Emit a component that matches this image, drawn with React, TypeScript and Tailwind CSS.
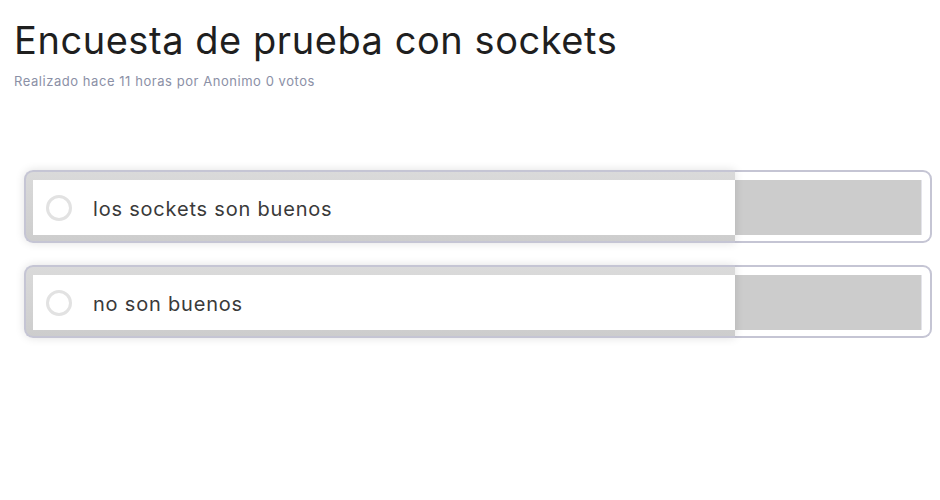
import React from "react";

const options = ["los sockets son buenos", "no son buenos"];

function Option({ label }: { label: string }) {
  return (
    <div className="flex h-[73px] w-[908px]">
      <div className="z-10 flex w-[711px] shrink-0 flex-col rounded-l-[9px] border-2 border-r-0 border-[#c5c5d4] bg-gradient-to-b from-[#dadada] to-[#cdcdcd] pl-[7px] pt-[8px] shadow-[0_0_10px_rgba(0,0,0,0.12)]">
        <div className="flex h-[55px] items-center gap-[21px] bg-white pl-[13px]">
          <span className="h-[26px] w-[26px] shrink-0 rounded-full border-[3px] border-[#e2e2e2]" />
          <span className="mt-[3px] text-[20px] leading-none tracking-[0.8px] text-[#3a3a3a]">{label}</span>
        </div>
      </div>
      <div className="flex flex-1 items-start rounded-r-[9px] border-2 border-l-0 border-[#c5c5d4] bg-white pr-[8px] pt-[8px]">
        <div className="h-[55px] flex-1 bg-[#cccccc]" />
        <div className="h-[55px] w-px bg-[#e4e4ea]" />
      </div>
    </div>
  );
}

export default function App() {
  return (
    <div className="h-[500px] w-[940px] bg-white" style={{ fontFamily: "Inter, 'Noto Sans', sans-serif" }}>
      <div className="px-[14px] pt-[18px]">
        <h1 className="text-[38px] font-normal leading-[44px] tracking-[0.55px] text-[#1f1f1f]">
          Encuesta de prueba con sockets
        </h1>
        <p className="mt-[11px] text-[13px] leading-[16px] tracking-[0.55px] text-[#8b90a6]">
          Realizado hace 11 horas por Anonimo 0 votos
        </p>
      </div>
      <div className="mt-[81px] flex flex-col gap-[22px] pl-[24px]">
        {options.map((o) => (
          <Option key={o} label={o} />
        ))}
      </div>
    </div>
  );
}
